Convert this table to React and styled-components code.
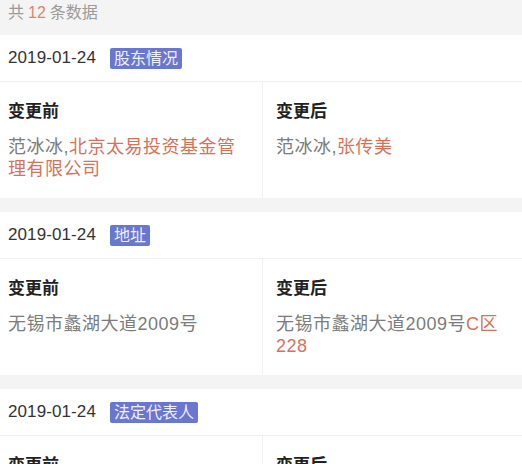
import React from "react";
import styled, { createGlobalStyle } from "styled-components";

const Global = createGlobalStyle`
  html, body { margin: 0; padding: 0; background: #f4f4f4; }
  body { font-family: "Liberation Sans", "Noto Sans CJK SC", sans-serif; -webkit-font-smoothing: antialiased; }
`;

const Page = styled.div`
  width: 522px;
  background: #f4f4f4;
`;

const Summary = styled.div`
  height: 35px;
  padding-left: 8px;
  font-size: 16px;
  line-height: 26px;
  color: #9a9a9a;
`;

const Count = styled.span`
  color: #df8466;
  margin: 0 4px;
`;

const Card = styled.section`
  background: #fff;
  margin-bottom: 14px;
`;

const DateRow = styled.div`
  height: 46px;
  display: flex;
  align-items: center;
  gap: 14px;
  padding-left: 8px;
  border-bottom: 1px solid #efefef;
`;

const DateText = styled.span`
  font-size: 17px;
  color: #333;
  letter-spacing: 0.1px;
`;

const Badge = styled.span`
  background: #6a77cf;
  color: #eef0ff;
  font-size: 16px;
  line-height: 19px;
  padding: 1px 4px;
  border-radius: 2px;
`;

const Body = styled.div`
  display: grid;
  grid-template-columns: 262px 1fr;
`;

const Column = styled.div`
  padding: 18px 16px 18px ${(p) => (p.$right ? "13px" : "8px")};
  border-left: ${(p) => (p.$right ? "1px solid #f0f0f0" : "none")};
`;

const Title = styled.div`
  font-size: 17px;
  line-height: 24px;
  font-weight: 700;
  color: #222;
  margin-bottom: 12px;
`;

const Content = styled.div`
  font-size: 18px;
  line-height: 22px;
  letter-spacing: 0.5px;
  color: #7c7c7c;
`;

const Mark = styled.span`
  color: #d6725a;
`;

const records = [
  {
    date: "2019-01-24",
    type: "股东情况",
    before: [["范冰冰,"], ["北京太易投资基金管理有限公司", true]],
    after: [["范冰冰,"], ["张传美", true]],
  },
  {
    date: "2019-01-24",
    type: "地址",
    before: [["无锡市蠡湖大道2009号"]],
    after: [["无锡市蠡湖大道2009号"], ["C区228", true]],
  },
  {
    date: "2019-01-24",
    type: "法定代表人",
    before: [["范冰冰"]],
    after: [["张传美", true]],
  },
];

const Parts = ({ parts }) =>
  parts.map(([text, hl], i) => (hl ? <Mark key={i}>{text}</Mark> : <span key={i}>{text}</span>));

export default function App() {
  return (
    <Page>
      <Global />
      <Summary>
        共<Count>12</Count>条数据
      </Summary>
      {records.map((r, i) => (
        <Card key={i}>
          <DateRow>
            <DateText>{r.date}</DateText>
            <Badge>{r.type}</Badge>
          </DateRow>
          <Body>
            <Column>
              <Title>变更前</Title>
              <Content>
                <Parts parts={r.before} />
              </Content>
            </Column>
            <Column $right>
              <Title>变更后</Title>
              <Content>
                <Parts parts={r.after} />
              </Content>
            </Column>
          </Body>
        </Card>
      ))}
    </Page>
  );
}
